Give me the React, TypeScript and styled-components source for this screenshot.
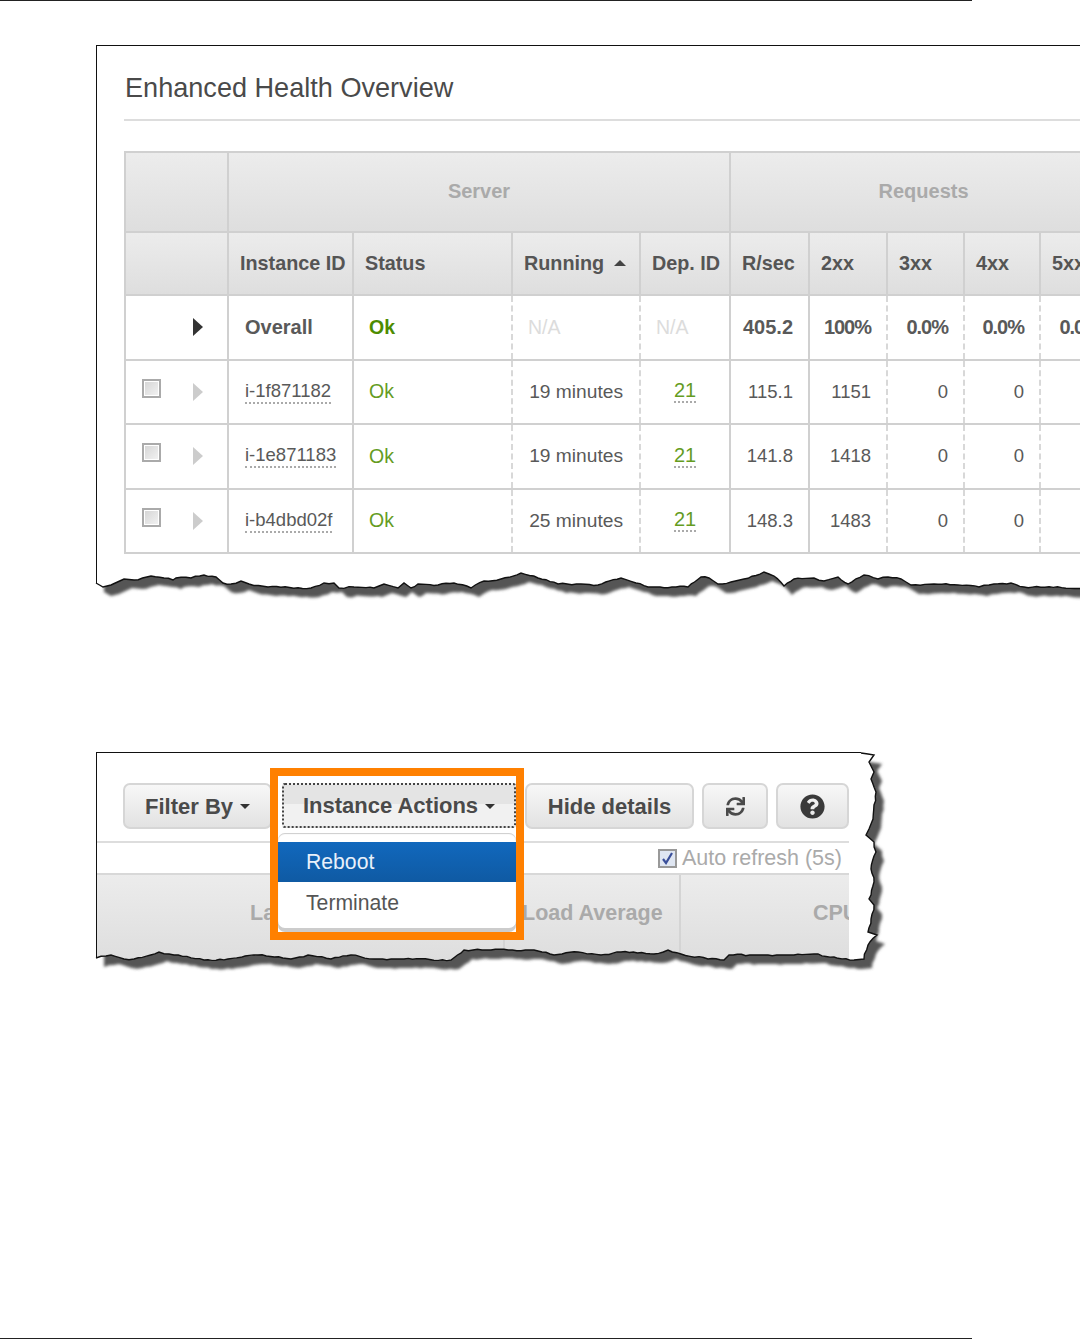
import React from "react";
import styled, { createGlobalStyle } from "styled-components";
import { FaSync, FaQuestionCircle } from "react-icons/fa";

type Pt = [number, number];

const GlobalStyle = createGlobalStyle`
  html, body { margin: 0; padding: 0; background: #fff; }
  body { font-family: "Liberation Sans", Arial, sans-serif; color: #555; }
`;

const Page = styled.div`
  position: relative;
  width: 1080px;
  height: 1339px;
  overflow: hidden;
  display: flex;
  flex-direction: column;
  background: #fff;
`;
const PageRule = styled.div`
  width: 972px;
  height: 1px;
  flex: none;
  background: #222;
`;
const FooterRule = styled(PageRule)`
  margin-top: auto;
`;
const ShotOne = styled.section`
  position: relative;
  box-sizing: border-box;
  flex: none;
  margin: 44px 0 0 96px;
  width: 984px;
  height: 546px;
  padding: 0 0 0 27px;
  border-top: 1.5px solid #111;
  border-left: 1.5px solid #111;
`;
const Title = styled.h2`
  box-sizing: border-box;
  height: 75px;
  margin: 0 0 30px;
  padding: 25px 0 0 1px;
  font-size: 27.1px;
  line-height: 34px;
  font-weight: 400;
  color: #4a4a4a;
  border-bottom: 2px solid #ddd;
`;
const Table = styled.table`
  table-layout: fixed;
  border-collapse: collapse;
  width: 992px;
  font-size: 18.5px;
`;
const headerGradient = "linear-gradient(#ececec, #dedede)";
const GroupTh = styled.th`
  height: 76px;
  padding: 0 0 2px;
  background: ${headerGradient};
  border: 2px solid #d0d0d0;
  font-size: 20px;
  font-weight: 700;
  color: #aaa;
  text-align: center;
`;
const ColTh = styled.th`
  height: 61px;
  padding: 0 0 0 11px;
  background: ${headerGradient};
  border: 2px solid #d0d0d0;
  font-size: 19.8px;
  font-weight: 700;
  color: #555;
  text-align: left;
  white-space: nowrap;
`;
const SortUp = styled.span`
  display: inline-block;
  margin: 0 0 4px 10px;
  border-left: 6px solid transparent;
  border-right: 6px solid transparent;
  border-bottom: 6px solid #444;
`;
const Td = styled.td<{ $align?: string; $strong?: boolean; $solid?: boolean; $pad?: number }>`
  height: 62.5px;
  padding: ${(p) => (p.$align === "right" ? `0 ${p.$pad ?? 15}px 0 0` : `0 0 0 ${p.$pad ?? 15}px`)};
  text-align: ${(p) => p.$align ?? "left"};
  font-weight: ${(p) => (p.$strong ? 700 : 400)};
  font-size: ${(p) => (p.$strong ? 20 : 18.5)}px;
  color: #595959;
  white-space: nowrap;
  border-top: 2px solid #d0d0d0;
  border-bottom: 2px solid #d0d0d0;
  border-left: 2px ${(p) => (p.$solid ? "solid #d0d0d0" : "dashed #d8d8d8")};
  border-right: 2px ${(p) => (p.$solid ? "solid #d0d0d0" : "dashed #d8d8d8")};
`;
const Percent = styled.span`
  letter-spacing: -1px;
`;
const ControlCell = styled.td`
  height: 62.5px;
  padding: 0;
  border: 2px solid #d0d0d0;
`;
const Controls = styled.div`
  display: flex;
  align-items: center;
  height: 40px;
  padding-left: 67px;
  position: relative;
  box-sizing: border-box;
  &[data-check="1"] { padding-left: 16px; }
`;
const Check = styled.span`
  box-sizing: border-box;
  display: block;
  flex: none;
  width: 19px;
  height: 19px;
  margin: -7px 32px 0 0;
  border: 2px solid #aaa;
  box-shadow: inset 0 0 0 1px #fff;
  background: linear-gradient(135deg, #d4d4d4, #f3f3f3);
`;
const Expand = styled.span<{ $dark?: boolean }>`
  display: block;
  flex: none;
  border-top: 9px solid transparent;
  border-bottom: 9px solid transparent;
  border-left: 10px solid ${(p) => (p.$dark ? "#333" : "#ccc")};
`;
const Ok = styled.span<{ $strong?: boolean }>`
  color: ${(p) => (p.$strong ? "#4d8c00" : "#659c1f")};
  font-size: 19.5px;
`;
const Na = styled.span`
  color: #dcdcdc;
  font-size: 19.5px;
`;
const Duration = styled.span`
  font-size: 19.2px;
`;
const Link = styled.span`
  display: inline-block;
  line-height: 20px;
  padding-bottom: 1px;
  border-bottom: 2px dotted #aaa;
`;
const GreenLink = styled(Link)`
  color: #659c1f;
  font-size: 20px;
`;
const ShotTwo = styled.section`
  position: relative;
  box-sizing: border-box;
  flex: none;
  margin: 161px 0 0 96px;
  width: 771px;
  height: 206px;
  border-top: 1.5px solid #111;
  border-left: 1.5px solid #111;
`;
const Toolbar = styled.div`
  display: flex;
  width: 752px;
  box-sizing: border-box;
  gap: 8px;
  padding: 30px 0 12px 26px;
  border-bottom: 2px solid #ddd;
`;
const Button = styled.button<{ $w: number }>`
  box-sizing: border-box;
  display: flex;
  align-items: center;
  justify-content: center;
  gap: 7px;
  flex: none;
  width: ${(p) => p.$w}px;
  height: 46px;
  padding: 1px 0 0;
  border: 2px solid #d6d6d6;
  border-radius: 7px;
  background: linear-gradient(#f7f7f7, #e2e2e2);
  font: 700 22px "Liberation Sans", Arial, sans-serif;
  color: #4a4a4a;
`;
const Caret = styled.span`
  display: block;
  border-left: 5.5px solid transparent;
  border-right: 5.5px solid transparent;
  border-top: 5px solid #333;
`;
const ActionsSlot = styled.div`
  position: relative;
  flex: none;
  width: 245px;
  margin-left: -8px;
`;
const Highlight = styled.div`
  position: absolute;
  z-index: 2;
  left: -2px;
  top: -15px;
  box-sizing: border-box;
  width: 254px;
  height: 172px;
  padding-top: 7px;
  border: 8px solid #ff8000;
  background: #fff;
`;
const ActiveButton = styled.button`
  box-sizing: border-box;
  display: flex;
  align-items: center;
  justify-content: center;
  gap: 7px;
  width: 234px;
  height: 45px;
  margin-left: 4px;
  padding: 1px 0 0;
  border: 2px dotted #444;
  border-radius: 3px;
  background: linear-gradient(#e4e4e4 0, #e4e4e4 46%, #f1f1f1 46%, #f1f1f1 100%);
  font: 700 22px "Liberation Sans", Arial, sans-serif;
  color: #4a4a4a;
`;
const Menu = styled.div`
  box-sizing: border-box;
  width: 238px;
  height: 99px;
  margin-top: 5px;
  padding-top: 9px;
  border-radius: 7px;
  background: #fff;
  box-shadow: inset 0 -4px 0 #ccc, inset 0 1px 1px #ccc;
  overflow: hidden;
`;
const MenuItem = styled.div<{ $on?: boolean }>`
  height: 40px;
  line-height: 40px;
  padding-left: 28px;
  font-size: 21.2px;
  color: ${(p) => (p.$on ? "#e8f0fa" : "#555")};
  background: ${(p) => (p.$on ? "linear-gradient(#1168bd, #0f5aa3)" : "transparent")};
  &:last-child { margin-top: 1px; }
`;
const AutoRow = styled.div`
  display: flex;
  justify-content: flex-end;
  align-items: center;
  gap: 5px;
  width: 745px;
  height: 30px;
  font-size: 21.5px;
  color: #aaa;
`;
const AutoCheck = styled.span`
  box-sizing: border-box;
  display: flex;
  align-items: center;
  justify-content: center;
  width: 19px;
  height: 19px;
  border: 2px solid #999;
  background: #dfe6f2;
`;
const BandRow = styled.div`
  display: flex;
  width: 752px;
  height: 84px;
  background: ${headerGradient};
  border-top: 2px solid #d8d8d8;
  overflow: hidden;
`;
const BandCell = styled.div<{ $w: number; $pad: number }>`
  box-sizing: border-box;
  flex: none;
  width: ${(p) => p.$w}px;
  height: 100%;
  padding: 26px 0 0 ${(p) => p.$pad}px;
  font-size: 21.5px;
  line-height: 24px;
  font-weight: 700;
  color: #aaa;
  white-space: nowrap;
  border-right: 2px solid #d4d4d4;
  &:last-child { border-right: 0; }
`;
const Torn = styled.svg`
  position: absolute;
  z-index: 3;
  left: -2px;
  top: -2px;
  overflow: visible;
  pointer-events: none;
`;

const bottomOne: Pt[] = [[95,582],[102,586],[110,584],[123,578],[133,579],[150,575],[163,577],[172,579],[175,577],[190,577],[203,574],[215,576],[222,582],[230,583],[240,580],[248,583],[267,586],[310,587],[323,582],[333,582],[338,587],[353,586],[373,587],[383,583],[397,587],[403,582],[410,587],[417,583],[437,584],[453,582],[470,587],[483,580],[500,578],[520,572],[537,577],[557,583],[580,583],[597,584],[620,577],[635,582],[647,586],[687,586],[700,576],[708,577],[717,583],[730,581],[743,578],[763,571],[773,575],[783,585],[793,578],[813,577],[823,580],[837,576],[847,583],[863,574],[877,578],[887,576],[900,578],[910,584],[933,583],[957,584],[978,586],[993,583],[1010,582],[1023,586],[1090,587]];
const edgeTwo: Pt[] = [[860,751],[867,752],[873,753],[868,760],[873,770],[870,777],[875,790],[873,803],[872,817],[868,827],[865,833],[873,840],[875,850],[870,867],[873,880],[868,897],[873,903],[870,917],[867,930],[876,933],[867,943],[863,957],[853,958],[813,952],[793,953],[767,953],[753,953],[728,953],[723,958],[707,957],[680,952],[667,948],[653,952],[620,950],[600,953],[577,950],[553,953],[533,948],[490,948],[463,948],[450,958],[403,957],[373,957],[350,953],[330,957],[307,953],[290,957],[257,953],[227,957],[203,958],[173,953],[158,950],[133,957],[123,957],[110,953],[95,956]];

function roughen(points: Pt[]): Pt[] {
  const out: Pt[] = [];
  let k = 0;
  points.forEach((p, i) => {
    const next = points[i + 1];
    out.push(p);
    if (!next) return;
    const len = Math.hypot(next[0] - p[0], next[1] - p[1]);
    const steps = Math.floor(len / 4);
    for (let s = 1; s < steps; s++) {
      k += 1;
      const t = s / steps;
      const n = Math.round(Math.sin(k * 12.9898) * 43758.5453) % 2;
      const vertical = Math.abs(next[1] - p[1]) > Math.abs(next[0] - p[0]);
      out.push([
        p[0] + (next[0] - p[0]) * t + (vertical ? n * 0.9 : 0),
        p[1] + (next[1] - p[1]) * t + (vertical ? 0 : n * 0.7),
      ]);
    }
  });
  return out;
}
const toPath = (pts: Pt[]) => pts.map((p, i) => `${i ? "L" : "M"}${p[0].toFixed(1)} ${p[1].toFixed(1)}`).join(" ");

function TornEdge({ id, points, box, outer, inner, dx, dy }: {
  id: string; points: Pt[]; box: [number, number, number, number]; outer: Pt[]; inner: Pt[]; dx: number; dy: number;
}) {
  const edge = roughen(points);
  const line = toPath(edge);
  const outside = line + " " + outer.map((p) => `L${p[0]} ${p[1]}`).join(" ") + " Z";
  const shadow = toPath([...edge, ...inner]) + " Z";
  return (
    <Torn width={box[2]} height={box[3]} viewBox={box.join(" ")}>
      <defs>
        <clipPath id={`${id}-clip`}><path d={outside} /></clipPath>
        <filter id={`${id}-blur`} x="-5%" y="-5%" width="110%" height="110%"><feGaussianBlur stdDeviation="1.8" /></filter>
      </defs>
      <g clipPath={`url(#${id}-clip)`}>
        <rect x={box[0] - 10} y={box[1] - 10} width={box[2] + 40} height={box[3] + 60} fill="#fff" />
        <path d={shadow} fill="#555" filter={`url(#${id}-blur)`} transform={`translate(${dx} ${dy})`} />
      </g>
      <path d={line} fill="none" stroke="#111" strokeWidth="1.4" />
    </Torn>
  );
}

const rows = [
  { id: "i-1f871182", run: "19 minutes", rs: "115.1", two: "1151" },
  { id: "i-1e871183", run: "19 minutes", rs: "141.8", two: "1418" },
  { id: "i-b4dbd02f", run: "25 minutes", rs: "148.3", two: "1483" },
];
const cols = [103, 125, 159, 128, 90, 79, 78, 77, 76, 77];

export default function App() {
  return (
    <Page>
      <GlobalStyle />
      <PageRule />
      <ShotOne>
        <Title>Enhanced Health Overview</Title>
        <Table>
          <colgroup>{cols.map((w, i) => <col key={i} style={{ width: w }} />)}</colgroup>
          <thead>
            <tr>
              <GroupTh />
              <GroupTh colSpan={4}>Server</GroupTh>
              <GroupTh colSpan={5}>Requests</GroupTh>
            </tr>
            <tr>
              <ColTh />
              <ColTh>Instance ID</ColTh>
              <ColTh>Status</ColTh>
              <ColTh>Running<SortUp /></ColTh>
              <ColTh>Dep. ID</ColTh>
              <ColTh>R/sec</ColTh>
              <ColTh>2xx</ColTh>
              <ColTh>3xx</ColTh>
              <ColTh>4xx</ColTh>
              <ColTh>5xx</ColTh>
            </tr>
          </thead>
          <tbody>
            <tr>
              <ControlCell><Controls><Expand $dark /></Controls></ControlCell>
              <Td $solid $strong $pad={16}>Overall</Td>
              <Td $pad={15}><Ok $strong><b>Ok</b></Ok></Td>
              <Td $pad={15}><Na>N/A</Na></Td>
              <Td $pad={15}><Na>N/A</Na></Td>
              <Td $solid $strong $align="right" $pad={15}>405.2</Td>
              <Td $strong $align="right"><Percent>100%</Percent></Td>
              <Td $strong $align="right"><Percent>0.0%</Percent></Td>
              <Td $strong $align="right"><Percent>0.0%</Percent></Td>
              <Td $strong $align="right"><Percent>0.0%</Percent></Td>
            </tr>
            {rows.map((r) => (
              <tr key={r.id}>
                <ControlCell><Controls data-check="1"><Check /><Expand /></Controls></ControlCell>
                <Td $solid $pad={16}><Link>{r.id}</Link></Td>
                <Td $pad={15}><Ok>Ok</Ok></Td>
                <Td $align="right" $pad={16}><Duration>{r.run}</Duration></Td>
                <Td $align="center" $pad={0}><GreenLink>21</GreenLink></Td>
                <Td $solid $align="right" $pad={15}>{r.rs}</Td>
                <Td $align="right">{r.two}</Td>
                <Td $align="right">0</Td>
                <Td $align="right">0</Td>
                <Td $align="right">0</Td>
              </tr>
            ))}
          </tbody>
        </Table>
        <TornEdge id="one" points={bottomOne} box={[94, 43, 986, 560]} outer={[[1090, 700], [95, 700]]} inner={[[1090, 40], [95, 40]]} dx={8} dy={9} />
      </ShotOne>
      <ShotTwo>
        <Toolbar>
          <Button $w={149}>Filter By<Caret /></Button>
          <ActionsSlot>
            <Highlight>
              <ActiveButton>Instance Actions<Caret /></ActiveButton>
              <Menu>
                <MenuItem $on>Reboot</MenuItem>
                <MenuItem>Terminate</MenuItem>
              </Menu>
            </Highlight>
          </ActionsSlot>
          <Button $w={169}>Hide details</Button>
          <Button $w={66}><FaSync size={19} /></Button>
          <Button $w={73}><FaQuestionCircle size={25} color="#3a3a3a" /></Button>
        </Toolbar>
        <AutoRow>
          <AutoCheck>
            <svg width="15" height="15" viewBox="0 0 15 15"><path d="M3 8l3 4 6-10" fill="none" stroke="#3a4f9a" strokeWidth="2.2" /></svg>
          </AutoCheck>
          Auto refresh (5s)
        </AutoRow>
        <BandRow>
          <BandCell $w={408} $pad={153}>Latency</BandCell>
          <BandCell $w={176} $pad={17}>Load Average</BandCell>
          <BandCell $w={168} $pad={132}>CPU User</BandCell>
        </BandRow>
        <TornEdge id="two" points={edgeTwo} box={[94, 749, 800, 230]} outer={[[95, 1000], [900, 1000], [900, 740], [860, 740]]} inner={[[95, 740]]} dx={8} dy={9} />
      </ShotTwo>
      <FooterRule />
    </Page>
  );
}
